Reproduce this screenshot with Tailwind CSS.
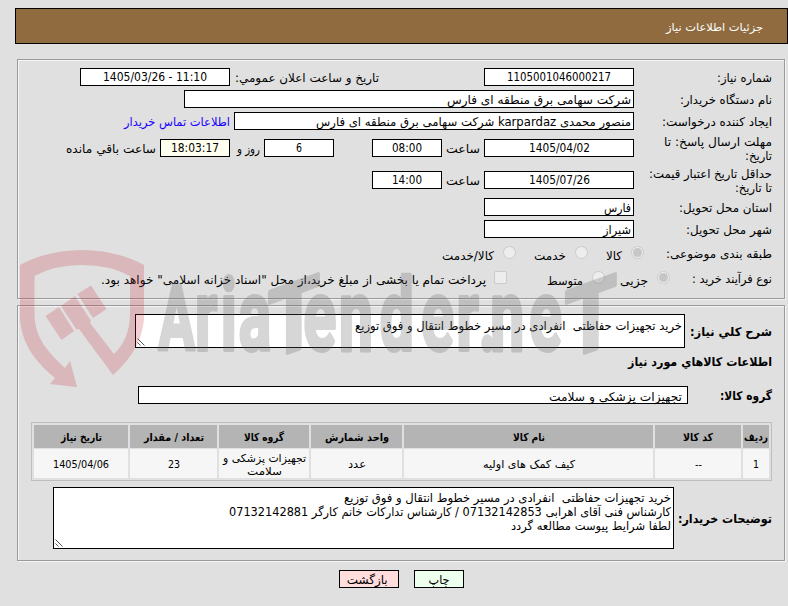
<!DOCTYPE html>
<html lang="fa" dir="rtl">
<head>
<meta charset="utf-8">
<title>جزئیات اطلاعات نیاز</title>
<script src="https://cdn.jsdelivr.net/npm/@tailwindcss/browser@4"></script>
</head>
<body class="relative w-[788px] h-[606px] overflow-hidden bg-[#e0e0e0] text-black text-[12px] leading-[14px] font-['DejaVu_Sans_Condensed','DejaVu_Sans',sans-serif] pt-2">
<header class="w-[773px] h-9 border border-black bg-[#8f6b3f] text-white flex items-center pr-6 pt-[3px] text-[11px]"><span data-w="97">جزئیات اطلاعات نیاز</span></header>

<section class="mt-[15px] mr-[3px] w-[768px] h-[240px] border border-[#9a9a9a] shadow-[inset_1px_1px_0_#f4f4f4,1px_1px_0_#f4f4f4] pr-3 pt-2">
  <div class="flex items-center h-[18px]">
    <div class="w-[138px] pt-0.5"><span data-w="55">شماره نیاز:</span></div>
    <div class="w-[150px] h-[18px] border border-black bg-white flex justify-center items-center"><span data-w="104">1105001046000217</span></div>
    <div class="mr-[105px] w-[149px] pt-0.5"><span data-w="144">تاریخ و ساعت اعلان عمومي:</span></div>
    <div class="w-[150px] h-[18px] border border-black bg-white flex justify-center items-center"><span dir="ltr" data-w="104">1405/03/26 - 11:10</span></div>
  </div>
  <div class="flex items-center h-[18px] mt-1">
    <div class="w-[138px] pt-0.5"><span data-w="92">نام دستگاه خریدار:</span></div>
    <div class="w-[450px] h-[18px] border border-black bg-white flex items-center pr-0.5 pt-0.5"><span data-w="184">شرکت سهامی برق منطقه ای فارس</span></div>
  </div>
  <div class="flex items-center h-[18px] mt-1">
    <div class="w-[138px] pt-0.5"><span data-w="110">ایجاد کننده درخواست:</span></div>
    <div class="w-[400px] h-[18px] border border-black bg-white flex items-center pr-0.5 pt-0.5"><span data-w="315">منصور محمدی karpardaz شرکت سهامی برق منطقه ای فارس</span></div>
    <a class="mr-1 pt-0.5 text-[#1a00ff]"><span data-w="106">اطلاعات تماس خریدار</span></a>
  </div>
  <div class="flex items-center h-7 mt-1">
    <div class="w-[138px] pt-0.5 flex flex-col items-start"><span data-w="108">مهلت ارسال پاسخ: تا</span><span data-w="27">تاریخ:</span></div>
    <div class="w-[150px] h-[18px] border border-black bg-white flex justify-center items-center"><span data-w="61">1405/04/02</span></div>
    <div class="w-[42px] pr-1 pt-0.5"><span data-w="34">ساعت</span></div>
    <div class="w-[70px] h-[18px] border border-black bg-white flex justify-center items-center"><span data-w="30">08:00</span></div>
    <div class="mr-[38px] w-[70px] h-[18px] border border-black bg-white flex justify-center items-center"><span data-w="6">6</span></div>
    <div class="w-[34px] pr-1 pt-0.5"><span data-w="23">روز و</span></div>
    <div class="w-[70px] h-[18px] border border-black bg-[#fffff0] flex justify-center items-center"><span data-w="48">18:03:17</span></div>
    <div class="mr-1 pt-0.5"><span data-w="90">ساعت باقي مانده</span></div>
  </div>
  <div class="flex items-center h-7 mt-1">
    <div class="w-[138px] pt-0.5 flex flex-col items-start"><span data-w="123">حداقل تاریخ اعتبار قیمت:</span><span data-w="37">تا تاریخ:</span></div>
    <div class="w-[150px] h-[18px] border border-black bg-white flex justify-center items-center"><span data-w="61">1405/07/26</span></div>
    <div class="w-[42px] pr-1 pt-0.5"><span data-w="34">ساعت</span></div>
    <div class="w-[70px] h-[18px] border border-black bg-white flex justify-center items-center"><span data-w="30">14:00</span></div>
  </div>
  <div class="flex items-center h-[18px] mt-1">
    <div class="w-[138px] pt-0.5"><span data-w="93">استان محل تحویل:</span></div>
    <div class="w-[150px] h-[18px] border border-black bg-white flex items-center pr-0.5 pt-0.5"><span data-w="27">فارس</span></div>
  </div>
  <div class="flex items-center h-[18px] mt-1">
    <div class="w-[138px] pt-0.5"><span data-w="86">شهر محل تحویل:</span></div>
    <div class="w-[150px] h-[18px] border border-black bg-white flex items-center pr-0.5 pt-0.5"><span data-w="28">شیراز</span></div>
  </div>
  <div class="flex items-center h-[18px] mt-[7px]">
    <div class="w-[128px]"><span data-w="106">طبقه بندی موضوعی:</span></div>
    <i class="size-[13px] -mt-1 rounded-full border border-[#cbcbcb] bg-[#ededed] flex items-center justify-center"><b class="size-[9px] rounded-full bg-[#c6c6c6]"></b></i>
    <div class="mr-[9px] w-[34px] pt-1"><span data-w="16">کالا</span></div>
    <i class="size-[13px] -mt-1 rounded-full border border-[#cbcbcb] bg-[#ededed]"></i>
    <div class="mr-[9px] w-[50px] pt-1"><span data-w="32">خدمت</span></div>
    <i class="size-[13px] -mt-1 rounded-full border border-[#cbcbcb] bg-[#ededed]"></i>
    <div class="mr-[9px] pt-1"><span data-w="52">کالا/خدمت</span></div>
  </div>
  <div class="flex items-center h-[18px] mt-[7px]">
    <div class="w-[102px]"><span data-w="80">نوع فرآیند خرید :</span></div>
    <i class="size-[13px] -mt-1 rounded-full border border-[#cbcbcb] bg-[#ededed] flex items-center justify-center"><b class="size-[9px] rounded-full bg-[#c6c6c6]"></b></i>
    <div class="mr-[9px] w-[43px] pt-1"><span data-w="28">جزیی</span></div>
    <i class="size-[13px] -mt-1 rounded-full border border-[#cbcbcb] bg-[#ededed]"></i>
    <div class="mr-[9px] w-[76px] pt-1"><span data-w="36">متوسط</span></div>
    <i class="size-[13px] rounded-[2px] border border-[#cbcbcb] bg-[#ededed] -mt-1"></i>
    <div class="mr-2 pt-0.5"><span data-w="385">پرداخت تمام یا بخشی از مبلغ خرید،از محل "اسناد خزانه اسلامی" خواهد بود.</span></div>
  </div>
</section>

<section class="mt-1.5 mr-[3px] w-[768px] h-[256px] border border-[#9a9a9a] shadow-[inset_1px_1px_0_#f4f4f4,1px_1px_0_#f4f4f4] pr-3 pt-2">
  <div class="flex items-center h-[34px]">
    <div class="w-[87px] pt-0.5 font-bold"><span data-w="82">شرح کلي نیاز:</span></div>
    <div class="relative w-[550px] h-[34px] border border-black bg-white pr-0.5 pt-1"><span data-w="327">خرید تجهیزات حفاظتی&nbsp; انفرادی در مسیر خطوط انتقال و فوق توزیع</span>
      <svg class="absolute left-px bottom-px" width="8" height="8" viewBox="0 0 8 8"><path d="M.5 .5l7 7M.5 4.500l3 3" stroke="#555" fill="none"/></svg></div>
  </div>
  <div class="mt-[7px] h-[14px] font-bold"><span data-w="144">اطلاعات کالاهاي مورد نیاز</span></div>
  <div class="flex items-center h-[18px] mt-[17px]">
    <div class="w-[84px] pt-0.5 font-bold"><span data-w="52">گروه کالا:</span></div>
    <div class="w-[550px] h-[18px] border border-black bg-white flex items-center pr-[5px] pt-[3px]"><span data-w="133">تجهیزات پزشکی و سلامت</span></div>
  </div>
  <div class="mt-[18px] w-[741px] h-[59px] border border-[#bebebe] pt-0.5 px-0.5 grid grid-cols-[26px_86px_249px_91px_90px_87px_94px] grid-rows-[23px_29px] gap-x-0.5 gap-y-px text-[11px] leading-[13px] *:flex *:flex-col *:items-center *:justify-center *:pt-0.5">
    <div class="bg-[#b4b4b4] font-bold"><span data-w="24">ردیف</span></div>
    <div class="bg-[#b4b4b4] font-bold"><span data-w="30">کد کالا</span></div>
    <div class="bg-[#b4b4b4] font-bold"><span data-w="32">نام کالا</span></div>
    <div class="bg-[#b4b4b4] font-bold"><span data-w="64">واحد شمارش</span></div>
    <div class="bg-[#b4b4b4] font-bold"><span data-w="40">گروه کالا</span></div>
    <div class="bg-[#b4b4b4] font-bold"><span data-w="60">تعداد / مقدار</span></div>
    <div class="bg-[#b4b4b4] font-bold"><span data-w="41">تاریخ نیاز</span></div>
    <div class="bg-[#f6f6f6]"><span data-w="6">1</span></div>
    <div class="bg-[#f6f6f6]"><span data-w="7">--</span></div>
    <div class="bg-[#f6f6f6]"><span data-w="92">کیف کمک های اولیه</span></div>
    <div class="bg-[#f6f6f6]"><span data-w="18">عدد</span></div>
    <div class="bg-[#f6f6f6]"><span data-w="83">تجهیزات پزشکی و</span><span data-w="35">سلامت</span></div>
    <div class="bg-[#f6f6f6]"><span data-w="12">23</span></div>
    <div class="bg-[#f6f6f6]"><span data-w="56">1405/04/06</span></div>
  </div>
  <div class="flex items-center h-[62px] mt-1.5">
    <div class="w-[98px] pt-0.5 font-bold"><span data-w="94">توضیحات خریدار:</span></div>
    <div class="relative w-[621px] h-[62px] border border-black bg-white pr-0.5 pt-[3px] flex flex-col items-start"><span data-w="327">خرید تجهیزات حفاظتی&nbsp; انفرادی در مسیر خطوط انتقال و فوق توزیع</span><span data-w="442">کارشناس فنی آقای اهرابی 07132142853 / کارشناس تدارکات خانم کارگر 07132142881</span><span data-w="160">لطفا شرایط پیوست مطالعه گردد</span>
      <svg class="absolute left-px bottom-px" width="8" height="8" viewBox="0 0 8 8"><path d="M.5 .5l7 7M.5 4.500l3 3" stroke="#555" fill="none"/></svg></div>
  </div>
</section>

<footer class="mt-[9px] mr-[324px] flex gap-[15px]">
  <button class="w-[50px] h-[18px] pt-0.5 border border-black bg-[#edffed] flex items-center justify-center"><span data-w="21">چاپ</span></button>
  <button class="w-[60px] h-[18px] pt-0.5 border border-black bg-[#ffdddd] flex items-center justify-center"><span data-w="41">بازگشت</span></button>
</footer>

<svg class="absolute left-0 top-0 pointer-events-none" width="788" height="606" viewBox="0 0 788 606" direction="ltr">
  <path fill="#c02030" fill-opacity=".21" d="M20 265Q48 250 82 250T144 265V315C144 340 130 360 113 375L79 329L76.500 329.500L61 306L75 296L91 321L90 323L114 354Q130 339 130 313V276Q110 265 82 265T34.500 276V315C35 338 48 352 65 368L70 361L77 387L50 384L55 378C33 360 20 340 20 315ZM45.500 316L59 307L74 331L61.500 340ZM77.500 294L91 285.500L106.500 309L93 318Z"/>
  <g opacity=".25" fill="#606060" stroke="#606060" stroke-width="4" stroke-linejoin="round" font-family="Roboto, sans-serif" font-weight="700">
    <g transform="translate(0 350) scale(.6 1)">
      <text font-size="90" x="264">A</text>
      <text font-size="101" x="325 368 398">ria</text>
      <text font-size="101" x="506 565 633 702 761 798 817 882">ender.ne</text>
    </g>
    <text font-size="95" transform="translate(268 360) skewY(-20) scale(.88 1)">T</text>
    <text font-size="95" transform="translate(565 360) skewY(-20) scale(.88 1)">T</text>
  </g>
</svg>
<script>
function fitLabels() {
  document.querySelectorAll('[data-w]').forEach(function (el) {
    el.style.display = 'block';
    el.style.flex = 'none';
    el.style.whiteSpace = 'pre';
    el.style.transform = 'none';
    el.style.width = 'max-content';
    var range = document.createRange();
    range.selectNodeContents(el);
    var natural = range.getBoundingClientRect().width, w = +el.dataset.w;
    el.style.width = w + 'px';
    el.style.transformOrigin = (getComputedStyle(el).direction === 'rtl' ? 'right' : 'left') + ' center';
    el.style.transform = 'scaleX(' + w / natural + ')';
  });
}
fitLabels();
window.addEventListener('load', fitLabels);
document.fonts.ready.then(fitLabels);
</script>
</body>
</html>
